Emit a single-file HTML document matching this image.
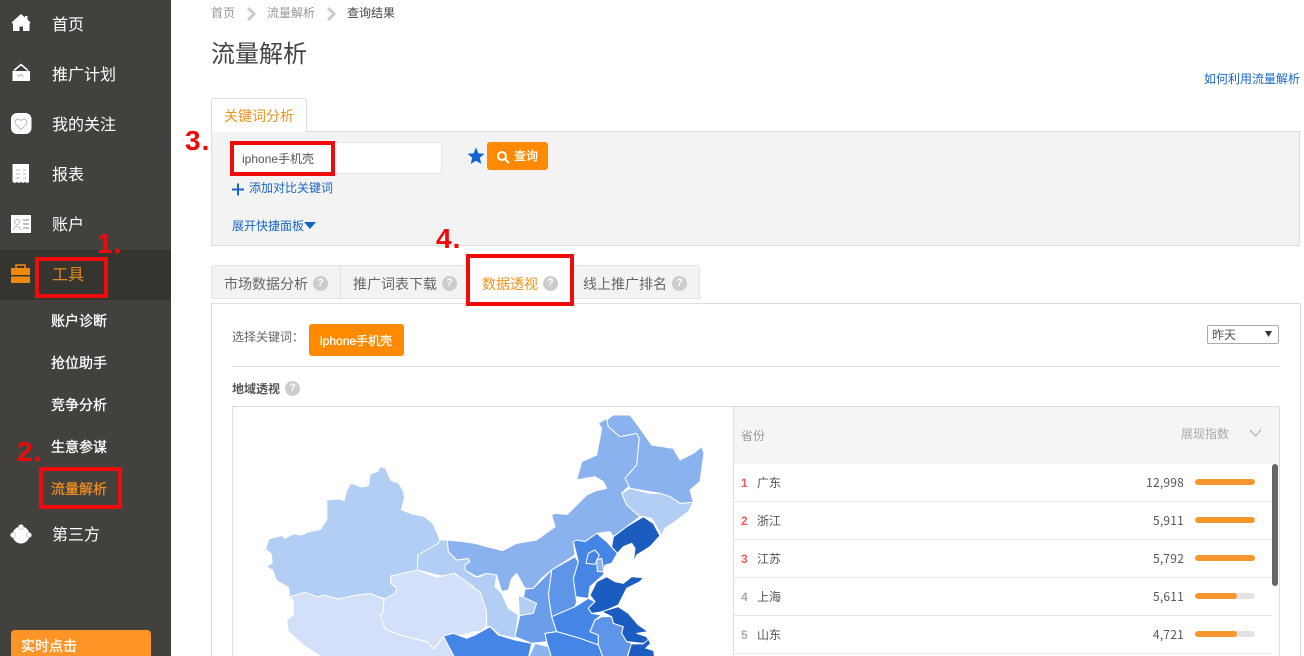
<!DOCTYPE html>
<html lang="zh"><head><meta charset="utf-8"><title>流量解析</title>
<style>
*{margin:0;padding:0;box-sizing:border-box}
html,body{width:1304px;height:656px;overflow:hidden;background:#fff}
body{position:relative;font-family:"Liberation Sans","Noto Sans CJK SC",sans-serif;font-size:12px;color:#666}
.a{position:absolute}
.t{position:absolute;line-height:20px;height:20px;white-space:nowrap}
.n{font-size:16px;color:#fff;left:52px}
.s{font-size:14px;color:#fff;left:51px;-webkit-text-stroke:.3px currentColor}
.r{position:absolute;border:4px solid #f00a0a}
.d{position:absolute;color:#ee0a0a;font-weight:bold;font-size:28px;line-height:30px;height:30px;letter-spacing:1px}
.h{position:absolute;width:15px;height:15px;border-radius:50%;background:#ccc;color:#fff;font-size:11px;line-height:15px;text-align:center;font-weight:bold}
.tab{font-size:14px;color:#666}
.row{position:absolute;left:734px;width:538px;height:38px;border-bottom:1px solid #e6e6e6}
.rk{position:absolute;left:7px;top:9px;line-height:20px;font-weight:bold;font-size:12px}
.nm{position:absolute;left:23px;top:9px;line-height:20px;color:#555}
.v{position:absolute;right:88px;top:9px;line-height:20px;color:#555;font-family:"Noto Sans CJK SC",sans-serif;letter-spacing:.2px}
.b{position:absolute;left:461px;top:15px;width:60px;height:6px;border-radius:3px;background:#e3e3e3;overflow:hidden}
.b i{display:block;height:6px;background:#f7962c;border-radius:3px}
</style></head><body>
<div class="a" style="left:0;top:0;width:171px;height:656px;background:#43413d"></div>
<div class="a" style="left:0;top:250px;width:171px;height:50px;background:#36342f"></div>

<svg class="a" style="left:0;top:0" width="171" height="656" viewBox="0 0 171 656">
<path d="M21 14L25 17.500V16H27.500V19.500L30.500 22.500L29.500 24V31H23V26.500H19.500V31H13V24L11.500 22.500Z" fill="#fff"/>
<path d="M14 70.500L21 64.500L28 70.500" fill="none" stroke="#fff" stroke-width="1.500"/>
<path d="M12.500 71H30V81H12.500Z" fill="#fff"/>
<path d="M17 74L19 76.500L21 74.500L23.500 77" fill="none" stroke="#bbb"/>
<rect x="11" y="113" width="20.500" height="21" rx="6" fill="#fff"/>
<path d="M21 129.500L15.500 124C13.500 120.500 17.500 117.500 21 120.500C24.500 117.500 28.500 120.500 26.500 124Z" fill="#fff" stroke="#bbb"/>
<path d="M12.500 164H29V182L27 183L25 182L23 183L21 182L19 183L17 182L15 183L12.500 182Z" fill="#fff"/>
<path d="M16 170H20M16 174H20M16 178H20M23 170H26M23 174H26M23 178H26" stroke="#bbb"/>
<rect x="11" y="215" width="20" height="18" fill="#fff"/>
<circle cx="17" cy="222" r="2.500" fill="none" stroke="#bbb"/>
<path d="M13.500 230C14 225 20 225 20.500 230" fill="none" stroke="#bbb"/>
<path d="M23 220H29M23 224H29M23 228H29" stroke="#888"/>
<path d="M16 268V265H25V268" fill="none" stroke="#f08a0e" stroke-width="1.500"/>
<path d="M11 268H30V275H11Z" fill="#f08a0e"/>
<path d="M11 276.500H30V283H11Z" fill="#f08a0e"/>
<circle cx="21" cy="535" r="8.500" fill="#fff"/>
<circle cx="21" cy="527" r="2.500" fill="#fff" stroke="#bbb" stroke-width=".6"/>
<circle cx="13" cy="535" r="2.500" fill="#fff" stroke="#bbb" stroke-width=".6"/>
<circle cx="29" cy="535" r="2.500" fill="#fff" stroke="#bbb" stroke-width=".6"/>
</svg>

<div class="t n" style="top:16px">首页</div>
<div class="t n" style="top:66px">推广计划</div>
<div class="t n" style="top:116px">我的关注</div>
<div class="t n" style="top:166px">报表</div>
<div class="t n" style="top:216px">账户</div>
<div class="t n" style="top:266px;color:#e08a20">工具</div>
<div class="t s" style="top:311px">账户诊断</div>
<div class="t s" style="top:353px">抢位助手</div>
<div class="t s" style="top:395px">竞争分析</div>
<div class="t s" style="top:437px">生意参谋</div>
<div class="t s" style="top:479px;color:#f08c1e">流量解析</div>
<div class="t n" style="top:526px">第三方</div>
<div class="a" style="left:11px;top:630px;width:140px;height:30px;background:#ff9526;border-radius:4px 4px 0 0"></div>
<div class="t s" style="left:21px;top:636px">实时点击</div>

<div class="t" style="left:211px;top:3px;color:#999">首页</div>
<div class="t" style="left:267px;top:3px;color:#999">流量解析</div>
<div class="t" style="left:347px;top:3px;color:#444">查询结果</div>
<svg class="a" style="left:245px;top:6px" width="100" height="16" fill="none" stroke="#ccc" stroke-width="3"><path d="M3 2L9 8L3 14M83 2L89 8L83 14"/></svg>
<div class="t" style="left:211px;top:40px;height:30px;line-height:30px;font-size:24px;color:#444">流量解析</div>
<div class="t" style="left:1204px;top:69px;color:#1a66c4">如何利用流量解析</div>

<div class="a" style="left:211px;top:131px;width:1089px;height:115px;background:#f3f3f3;border:1px solid #ddd"></div>
<div class="a" style="left:211px;top:98px;width:96px;height:34px;background:#fff;border:1px solid #ddd;border-bottom:0;border-radius:3px 3px 0 0"></div>
<div class="t tab" style="left:224px;top:106px;color:#f0921e">关键词分析</div>
<div class="a" style="left:231px;top:142px;width:211px;height:32px;background:#fff;border:1px solid #e6e6e6;border-radius:3px"></div>
<div class="t" style="left:242px;top:149px;color:#555">iphone手机壳</div>
<svg class="a" style="left:467px;top:147px" width="18" height="18"><path d="M9 0.500L11.400 6.300L17.500 6.800L12.800 10.800L14.300 17L9 13.700L3.700 17L5.200 10.800L.500 6.800L6.600 6.300Z" fill="#0f66d0"/></svg>
<div class="a" style="left:487px;top:142px;width:61px;height:28px;background:#ff8a00;border-radius:3px"></div>
<svg class="a" style="left:496px;top:150px" width="14" height="14" fill="none" stroke="#fff" stroke-width="2"><circle cx="6" cy="6" r="4"/><path d="M9 9L13 13"/></svg>
<div class="t" style="left:514px;top:146px;color:#fff;-webkit-text-stroke:.3px #fff">查询</div>
<svg class="a" style="left:232px;top:183px" width="13" height="13" stroke="#1a66c4" stroke-width="2"><path d="M0 6.500H12M6 .5V12.500"/></svg>
<div class="t" style="left:249px;top:178px;color:#1a66c4">添加对比关键词</div>
<div class="t" style="left:232px;top:216px;color:#1a66c4">展开快捷面板</div>
<svg class="a" style="left:304px;top:222px" width="13" height="8"><path d="M0 0H12L6 7Z" fill="#0f66c8"/></svg>

<div class="a" style="left:211px;top:265px;width:489px;height:34px;background:#f3f3f3;border:1px solid #e3e3e3;border-radius:3px 3px 0 0"></div>
<div class="a" style="left:340px;top:265px;width:1px;height:34px;background:#e0e0e0"></div>
<div class="a" style="left:211px;top:303px;width:1090px;height:360px;background:#fff;border:1px solid #ddd"></div>
<div class="a" style="left:466px;top:265px;width:106px;height:40px;background:#fff"></div>
<div class="t tab" style="left:224px;top:274px">市场数据分析</div><div class="h" style="left:313px;top:276px">?</div>
<div class="t tab" style="left:353px;top:274px">推广词表下载</div><div class="h" style="left:442px;top:276px">?</div>
<div class="t tab" style="left:482px;top:274px;color:#f0921e">数据透视</div><div class="h" style="left:543px;top:276px">?</div>
<div class="t tab" style="left:583px;top:274px">线上推广排名</div><div class="h" style="left:672px;top:276px">?</div>

<div class="t" style="left:232px;top:327px">选择关键词<span style="font-family:'Noto Sans CJK TC',sans-serif">：</span></div>
<div class="a" style="left:309px;top:324px;width:95px;height:32px;background:#ff8a00;border-radius:3px"></div>
<div class="t" style="left:320px;top:331px;color:#fff;-webkit-text-stroke:.3px #fff">iphone手机壳</div>
<div class="a" style="left:1207px;top:325px;width:72px;height:19px;border:1px solid #aaa;border-radius:2px;background:#fff"></div>
<div class="t" style="left:1212px;top:325px;color:#555">昨天</div>
<svg class="a" style="left:1265px;top:331px" width="8" height="6"><path d="M0 0H7L3.500 6Z" fill="#333"/></svg>
<div class="a" style="left:232px;top:366px;width:1048px;height:1px;background:#ddd"></div>
<div class="t" style="left:232px;top:379px;font-weight:bold;color:#555">地域透视</div><div class="h" style="left:285px;top:381px">?</div>

<div class="a" style="left:232px;top:406px;width:1048px;height:260px;border:1px solid #ddd"></div>
<div class="a" style="left:733px;top:407px;width:1px;height:249px;background:#ddd"></div>
<div class="a" style="left:734px;top:407px;width:545px;height:57px;background:#f5f5f5"></div>
<div class="t" style="left:741px;top:426px;color:#999">省份</div>
<div class="t" style="left:1181px;top:424px;color:#aaa">展现指数</div>
<svg class="a" style="left:1249px;top:429px" width="13" height="9" fill="none" stroke="#aaa"><path d="M1 1L6.500 7L12 1"/></svg>

<div class="row" style="top:464px"><span class="rk" style="color:#f25a5a">1</span><span class="nm">广东</span><span class="v">12,998</span><div class="b"><i style="width:100%"></i></div></div>
<div class="row" style="top:502px"><span class="rk" style="color:#f25a5a">2</span><span class="nm">浙江</span><span class="v">5,911</span><div class="b"><i style="width:100%"></i></div></div>
<div class="row" style="top:540px"><span class="rk" style="color:#f25a5a">3</span><span class="nm">江苏</span><span class="v">5,792</span><div class="b"><i style="width:100%"></i></div></div>
<div class="row" style="top:578px"><span class="rk" style="color:#aaa">4</span><span class="nm">上海</span><span class="v">5,611</span><div class="b"><i style="width:70%"></i></div></div>
<div class="row" style="top:616px"><span class="rk" style="color:#aaa">5</span><span class="nm">山东</span><span class="v">4,721</span><div class="b"><i style="width:70%"></i></div></div>
<div class="a" style="left:1272px;top:464px;width:6px;height:122px;background:#666;border-radius:3px"></div>

<svg class="a" style="left:233px;top:407px" width="500" height="249" viewBox="0 0 500 249">
<g transform="translate(-3,-2) scale(.33333)" stroke="#fff" stroke-width="3" stroke-linejoin="round">
<path fill="#b2cef4" stroke="none" d="M108 432L118 403L155 393L165 402L190 388L215 392L235 382L272 375L292 345L292 290L288 287L330 283L343 290L350 262L362 236L395 248L417 243L422 208L445 200L450 187L465 190L482 228L505 235L520 262L522 280L513 315L545 328L580 335L607 355L628 403L625 415L565 450L563 495L482 513L482 535L500 550L495 565L483 575L465 580L420 565L370 572L325 582L280 570L262 576L225 562L180 575L178 548L140 525L130 495L112 485L128 475L125 445Z"/>
<path fill="#d2e1f9" d="M180 575L225 562L262 576L280 570L325 582L370 572L420 565L462 583L458 625L450 630L465 672L510 690L590 710L612 732L640 695L700 800L300 800L270 753L220 720L175 680L170 645L190 630L190 590Z"/>
</g>
<g transform="translate(247,-2) scale(.33333)" stroke="#fff" stroke-width="3" stroke-linejoin="round">
<path fill="#b2cef4" d="M-187 450L-125 415L-120 405L-98 405L-95 440L-70 465L-35 460L-30 470L-45 480L-45 495L-15 515L0 515L20 505L50 510L45 545L65 565L85 610L115 630L105 700L60 690L30 665L15 665L20 620L0 580L-20 545L-50 525L-75 505L-105 515L-130 510L-187 495Z"/>
<path fill="#d2e1f9" d="M-268 513L-187 495L-130 517L-80 505L-50 522L-20 548L0 560L20 620L20 660L5 680L-15 680L-50 690L-110 695L-138 732L-160 710L-240 690L-285 672L-300 630L-292 625L-288 583L-255 565L-250 550L-268 535Z"/>
<path fill="#8ab2ee" d="M-98 405L-50 410L-15 415L20 425L50 432L68 437L110 415L170 405L225 365L215 330L225 325L262 328L320 270L345 258L380 250L370 230L345 215L290 225L305 170L350 150L365 70L355 55L380 40L385 65L420 95L470 85L478 100L470 180L435 220L450 240L425 265L440 300L480 335L440 365L400 395L390 380L350 385L315 410L280 410L285 450L215 495L185 520L160 550L135 550L110 505L95 520L85 555L65 560L50 510L20 505L-10 515L-45 495L-45 480L-30 470L-35 460L-70 465L-95 440Z"/>
<path fill="#8ab2ee" d="M380 45L400 30L450 30L480 70L515 120L580 130L600 165L640 145L665 125L672 145L660 230L630 255L640 292L600 295L570 275L540 265L450 250L435 220L470 180L478 100L470 85L420 95L385 65Z"/>
<path fill="#b2cef4" d="M425 265L450 250L510 265L540 265L570 275L600 295L640 292L625 320L585 350L555 370L545 392L515 340L490 335L480 335L440 300Z"/>
<path fill="#1a5cbf" d="M395 425L400 395L440 365L490 335L520 355L540 392L510 425L470 450L460 470L465 430L455 415L430 425L412 445Z"/>
<path fill="#4585e5" d="M280 410L290 405L315 410L350 385L380 410L412 445L395 475L375 480L370 510L330 545L325 580L285 575L280 520L295 470Z"/>
<path fill="#4585e5" d="M318 475L325 445L345 435L358 450L345 478Z"/>
<path fill="#8ab2ee" d="M350 465L365 460L372 500L352 500Z"/>
<path fill="#5f95e8" d="M215 495L285 455L295 470L280 520L290 590L285 605L215 635L205 570Z"/>
<path fill="#6a9dea" d="M135 552L160 550L215 495L205 570L215 635L230 680L195 685L200 710L155 715L105 695L120 630Z"/>
<path fill="#b2cef4" d="M115 570L170 595L160 625L118 632Z"/>
<path fill="#4585e5" d="M215 635L285 605L325 580L345 590L325 610L335 625L365 630L345 645L330 680L355 690L355 720L300 700L230 680Z"/>
<path fill="#1a5cbf" d="M330 570L350 530L380 515L405 530L430 535L455 515L490 518L480 530L440 550L415 600L370 620L335 625L325 610L345 590Z"/>
<path fill="#5f95e8" d="M345 645L365 635L395 635L400 655L430 665L425 685L440 710L455 715L440 760L370 760L355 720L355 690L330 680Z"/>
<path fill="#1a5cbf" d="M365 620L415 605L445 625L475 660L505 680L470 685L500 695L505 705L490 715L440 710L425 685L430 665L400 655L395 635Z"/>
<path fill="#4585e5" d="M195 685L230 680L300 700L355 720L370 760L215 760L200 710Z"/>
<path fill="#8ab2ee" d="M145 760L165 715L205 725L215 760Z"/>
<path fill="#4585e5" d="M-110 693L-80 685L-40 700L-15 690L30 665L55 690L105 705L155 715L145 760L-75 760Z"/>
<path fill="#1a5cbf" stroke="none" d="M443 760L455 718L490 718L505 705L510 715L495 730L520 738L522 760Z"/>
</g>
</svg>

<div class="r" style="left:35px;top:257px;width:73px;height:41px"></div>
<div class="r" style="left:39px;top:467px;width:83px;height:42px"></div>
<div class="r" style="left:230px;top:141px;width:105px;height:35px"></div>
<div class="r" style="left:466px;top:254px;width:108px;height:52px"></div>
<div class="d" style="left:97px;top:229px">1.</div>
<div class="d" style="left:17px;top:437px">2.</div>
<div class="d" style="left:185px;top:126px">3.</div>
<div class="d" style="left:436px;top:224px">4.</div>
</body></html>
